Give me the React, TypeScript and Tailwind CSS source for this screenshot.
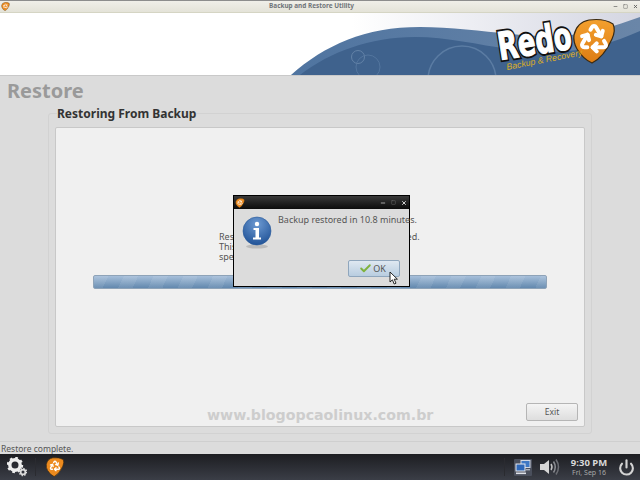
import React from 'react';
import { Recycle, Power, Check, Minus, X, Square } from 'lucide-react';

const sans = "font-['Noto_Sans','Open_Sans',sans-serif]";

function Shield({ size, className = '' }: { size: number; className?: string }) {
  return (
    <svg width={size} height={size} viewBox="0 0 44 46" className={className}>
      <path d="M2 17 Q5 4 17 2 Q32 0 41 6 Q44 12 40 21 Q32 39 20 45 Q11 41 5 31 Q1 24 2 17 Z" fill="#ec8a1e" stroke="#3a2a12" strokeWidth="1.5" />
      <Recycle x="8" y="6" width="28" height="28" color="#fff" strokeWidth={2.6} />
    </svg>
  );
}

function Banner() {
  return (
    <svg viewBox="0 13 640 62" width="640" height="62" className="block shrink-0">
      <defs>
        <linearGradient id="sky" x1="0" x2="1" y1="0" y2="0">
          <stop offset="0.55" stopColor="#ffffff" />
          <stop offset="1" stopColor="#d4d6e2" />
        </linearGradient>
        <linearGradient id="band" x1="0" x2="1" y1="0" y2="0">
          <stop offset="0" stopColor="#4f74a0" />
          <stop offset="1" stopColor="#6a86a8" />
        </linearGradient>
        <linearGradient id="shield" x1="0" x2="0" y1="0" y2="1">
          <stop offset="0" stopColor="#f3a02e" />
          <stop offset="1" stopColor="#dd7c14" />
        </linearGradient>
      </defs>
      <rect x="0" y="13" width="640" height="62" fill="url(#sky)" />
      <path d="M291 75 C325 45 365 27 420 27 C470 27 520 38 560 36 C590 34 615 26 640 17 L640 75 Z" fill="url(#band)" />
      <path d="M300 75 C330 52 370 37 415 37 C460 37 500 52 550 52 C585 52 615 42 640 31 L640 75 Z" fill="#3f628d" />
      <circle cx="358" cy="57" r="6.5" fill="none" stroke="#6c8aad" strokeWidth="0.8" />
      <circle cx="368" cy="67" r="12" fill="none" stroke="#587aa2" strokeWidth="0.8" />
      <circle cx="462" cy="80" r="34" fill="none" stroke="#5b7ca3" strokeWidth="1.5" />
      <g transform="translate(572 18)">
        <path d="M2 17 Q5 4 17 2 Q32 0 41 6 Q44 12 40 21 Q32 39 20 45 Q11 41 5 31 Q1 24 2 17 Z" fill="url(#shield)" stroke="#3a2a12" strokeWidth="1.2" />
        <Recycle x="6" y="4" width="32" height="32" color="#fff" strokeWidth={3} />
      </g>
      <g transform="rotate(-9 500 60)">
        <text x="500" y="60" fontFamily="'DejaVu Sans', sans-serif" fontWeight="700" fontSize="38" textLength="74" lengthAdjust="spacingAndGlyphs" fill="#111" stroke="#111" strokeWidth="5">Redo</text>
        <text x="500" y="60" fontFamily="'DejaVu Sans', sans-serif" fontWeight="700" fontSize="38" textLength="74" lengthAdjust="spacingAndGlyphs" fill="#fff" stroke="#fff" strokeWidth="1.2" aria-hidden="true">Redo</text>
      </g>
      <text transform="translate(507 70) rotate(-11)" fontFamily="'Liberation Sans', sans-serif" fontStyle="italic" fontSize="8.8" fill="#dcae28">Backup &amp; Recovery</text>
    </svg>
  );
}

function Gears() {
  return (
    <svg width="20" height="20" viewBox="0 0 20 20">
      <circle cx="8" cy="8" r="5.2" fill="none" stroke="#eee" strokeWidth="3.4" />
      <circle cx="8" cy="8" r="7" fill="none" stroke="#eee" strokeWidth="2.4" strokeDasharray="2.6 2.9" />
      <circle cx="16" cy="15" r="2.4" fill="none" stroke="#ddd" strokeWidth="1.8" />
      <circle cx="16" cy="15" r="3.6" fill="none" stroke="#ddd" strokeWidth="1.3" strokeDasharray="1.4 1.4" />
    </svg>
  );
}

function Network() {
  return (
    <svg width="16" height="15" viewBox="0 0 16 15">
      <rect x="6" y="0.5" width="9" height="7" fill="#3f78c4" stroke="#cfd6e2" strokeWidth="1" />
      <rect x="1" y="4" width="9" height="7" fill="#2f68b8" stroke="#e6e8ee" strokeWidth="1" />
      <rect x="1" y="12.5" width="10" height="1.6" fill="#dfe2e8" />
      <rect x="11" y="9" width="4" height="1.4" fill="#aab0bb" />
    </svg>
  );
}

function Speaker() {
  return (
    <svg width="21" height="18" viewBox="0 0 21 18">
      <path d="M1 6 H5 L10 2 V16 L5 12 H1 Z" fill="#d6d6d6" />
      <path d="M12 6 Q14 9 12 12" fill="none" stroke="#c4c4c4" strokeWidth="1.5" />
      <path d="M14.5 3.5 Q18 9 14.5 14.5" fill="none" stroke="#8b8d92" strokeWidth="1.5" />
      <path d="M17 1.5 Q22 9 17 16.5" fill="none" stroke="#6c6e74" strokeWidth="1.5" />
    </svg>
  );
}

function InfoIcon() {
  return (
    <svg width="30" height="34" viewBox="0 0 30 34">
      <defs>
        <radialGradient id="info" cx="0.5" cy="0.25" r="0.8">
          <stop offset="0" stopColor="#6d9ad2" />
          <stop offset="1" stopColor="#1d4f94" />
        </radialGradient>
      </defs>
      <ellipse cx="15" cy="30.5" rx="11" ry="2" fill="#bbb" />
      <circle cx="15" cy="15" r="14" fill="url(#info)" stroke="#2a5a9a" strokeWidth="0.6" />
      <circle cx="15" cy="8" r="2.2" fill="#fff" />
      <path d="M11.5 12 H17 V21.5 H19 V23.5 H11 V21.5 H13.5 V14 H11.5 Z" fill="#fff" />
    </svg>
  );
}

function Cursor() {
  return (
    <svg width="9" height="14" viewBox="0 0 9 14" className="absolute left-[389px] top-[271px]">
      <path d="M1 1 V11 L3.4 8.8 L5.2 13 L7 12.2 L5.2 8.2 H8.4 Z" fill="#fff" stroke="#111" strokeWidth="0.9" />
    </svg>
  );
}

function Dialog() {
  return (
    <div className={`absolute left-[233px] top-[195px] w-[177px] h-[92px] border border-black bg-[#dcdcdc] flex flex-col ${sans}`}>
      <div className="h-[13px] flex items-center justify-between px-[1px] bg-gradient-to-b from-[#3a3a3a] to-[#0c0c0c]">
        <Shield size={10} />
        <div className="flex items-center gap-[5px] pr-[1px] text-[#cfcfcf]">
          <Minus size={6} strokeWidth={3} />
          <Square size={5} strokeWidth={2} color="#777" />
          <X size={6} strokeWidth={4} />
        </div>
      </div>
      <div className="flex-1 flex flex-col pl-[8px] pr-[9px]">
        <div className="flex gap-[6px] pt-[5px]">
          <div className="pt-[2px]"><InfoIcon /></div>
          <span className="text-[9px] leading-[12px] text-[#555] whitespace-nowrap">Backup restored in 10.8 minutes.</span>
        </div>
        <div className="flex justify-end mt-auto mb-[9px]">
          <button className="w-[52px] h-[17px] rounded-[2px] border border-[#8fa6bd] bg-gradient-to-b from-[#dfe8f1] to-[#b9cde0] flex items-center justify-center gap-[1px] pr-[3px] text-[9px] text-[#555]">
            <Check size={13} strokeWidth={3.5} color="#7fb23f" />
            OK
          </button>
        </div>
      </div>
    </div>
  );
}

export default function App() {
  return (
    <div className={`relative w-[640px] h-[480px] overflow-hidden flex flex-col bg-[#dcdcdc] ${sans}`}>
      {/* Window title */}
      <div className="h-[13px] shrink-0 border-t border-t-[#8d8d8d] border-b border-b-[#d5d5c4] bg-gradient-to-b from-[#f0efe9] to-[#e4e3d8] flex items-center justify-between pl-[1px] pr-[2px]">
        <Shield size={9} />
        <span className="text-[6.4px] font-bold text-[#6f7479] leading-none">Backup and Restore Utility</span>
        <div className="flex items-center gap-[5px] text-[#555]">
          <Minus size={5} strokeWidth={3} />
          <Square size={5} strokeWidth={2} />
          <X size={5} strokeWidth={4} />
        </div>
      </div>

      <Banner />

      <div className="flex-1 min-h-0 border-t border-t-[#c9c9c9] flex flex-col">
        <h1 className="ml-[7px] mt-[2px] text-[20px] leading-[25px] font-bold text-[#9a9a9a]">Restore</h1>

        <fieldset className="ml-[48px] mr-[48px] mt-[3px] h-[328px] border border-[#d2d2d2] rounded-[3px] pl-[6px] pr-[6px] pb-[6px]">
          <legend className="ml-[2px] text-[12px] leading-[15px] font-bold text-[#333]">Restoring From Backup</legend>
          <div className="h-[300px] mt-[6px] bg-[#f0f0f0] border border-[#c8c8c8] rounded-[2px] flex flex-col px-[37px]">
            <div className="mt-[104px] ml-[126px] text-[9px] leading-[10px] text-[#555] whitespace-nowrap">
              <p>Restoring your computer from backup finished.</p>
              <p>This may take a while, depending on</p>
              <p>speed of the drive.</p>
            </div>
            <div className="mt-[13px] h-[14px] rounded-[2px] border border-[#8ea3b8] bg-[repeating-linear-gradient(115deg,#ffffff14_0,#ffffff14_13px,transparent_13px,transparent_27px),linear-gradient(to_bottom,#a6bfda,#6288ae)]" />
            <div className="mt-auto mb-[5px] flex justify-end -mr-[31px]">
              <button className="w-[52px] h-[18px] rounded-[2px] border border-[#b5b5b5] bg-gradient-to-b from-[#f4f4f4] to-[#dedede] text-[8.5px] text-[#555]">Exit</button>
            </div>
          </div>
        </fieldset>

        {/* Status bar */}
        <div className="mt-[7px] flex-1 border-t border-t-[#cfcfcf] pl-[1px] text-[8.5px] leading-[13px] text-[#555]">Restore complete.</div>
      </div>

      {/* Desktop panel */}
      <div className="h-[26px] shrink-0 bg-gradient-to-b from-[#1d1e22] to-[#3b3e47] flex items-center pl-[7px] pr-[5px]">
        <Gears />
        <div className="w-px h-[18px] bg-[#2a2b30] ml-[8px] mr-[9px]" />
        <Shield size={20} />
        <div className="ml-auto w-px h-[18px] bg-[#2a2b30] mr-[9px]" />
        <div className="w-[18px] h-[17px] bg-[#4a4f5c] rounded-[1px] flex items-center justify-center mr-[7px]"><Network /></div>
        <Speaker />
        <div className="ml-[9px] mr-[9px] w-[40px] flex flex-col items-center leading-none">
          <span className="text-[9.5px] font-bold text-[#d8d8d8]">9:30 PM</span>
          <span className="text-[7px] text-[#a8a8a8] mt-[1px]">Fri, Sep 16</span>
        </div>
        <Power size={17} strokeWidth={3} color="#d4d4d4" />
      </div>

      <Dialog />
      <Cursor />

      {/* Watermark */}
      <span className="absolute left-[207px] top-[405px] text-[14.2px] leading-[20px] font-bold text-[#cdcdcd] font-['DejaVu_Sans',sans-serif] whitespace-nowrap">www.blogopcaolinux.com.br</span>
    </div>
  );
}
